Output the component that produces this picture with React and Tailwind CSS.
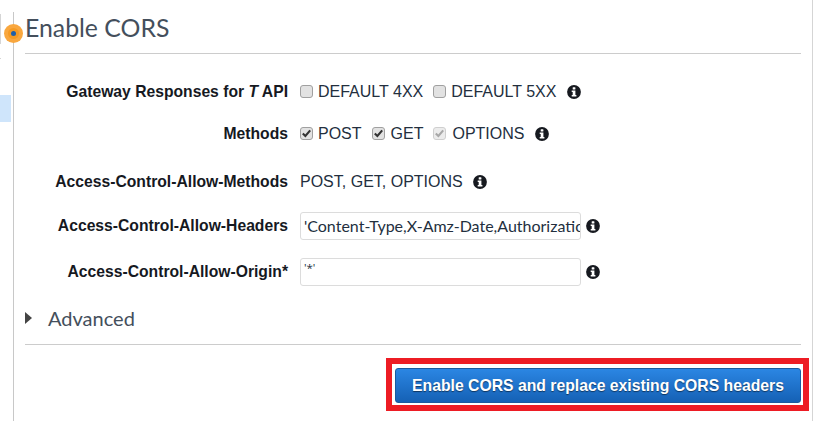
import React from "react";

function Info() {
  return (
    <svg width="14" height="14" viewBox="0 0 14 14" className="shrink-0 block">
      <circle cx="7" cy="7" r="6.9" fill="#16191f" />
      <rect x="5.7" y="2.2" width="2.7" height="2.4" rx="0.5" fill="#fff" />
      <path d="M4.7 5.5h3.7v4.4h1v1.6H4.7V9.9h1V7.1h-1z" fill="#fff" />
    </svg>
  );
}

function Check({ checked, disabled, label, className = "", gap = "ml-[5px]" }) {
  return (
    <span className={`inline-flex items-center ${className}`}>
      <span
        className={`-mt-[2px] w-[13px] h-[13px] rounded-[3px] border flex items-center justify-center ${
          disabled ? "border-[#cfcfcf] bg-[#ececec]" : "border-[#a0a0a0] bg-[#e2e2e2]"
        }`}
      >
        {checked && (
          <svg width="9" height="9" viewBox="0 0 9 9">
            <path
              d="M0.8 4.4 3.4 7 8.2 1.4"
              fill="none"
              stroke={disabled ? "#a8a8a8" : "#333"}
              strokeWidth="2.1"
            />
          </svg>
        )}
      </span>
      <span className={gap}>{label}</span>
    </span>
  );
}

function Row({ label, className = "", children }) {
  return (
    <div className={`flex items-center ${className}`}>
      <div className="w-[263px] text-right font-bold text-[#16191f] text-[15.7px] whitespace-nowrap">{label}</div>
      <div className="ml-[12px] flex items-center text-[16px] text-[#232f3e] whitespace-nowrap">{children}</div>
    </div>
  );
}

function TextBox({ value, small }) {
  return (
    <div
      className={`w-[281px] h-[28px] border border-[#dcdcdc] rounded-[3px] bg-white pl-[3px] overflow-hidden whitespace-nowrap text-[#232f3e] ${
        small ? "text-[11.5px] leading-[18px]" : "text-[16px] leading-[26px]"
      }`}
      style={{ fontFamily: small ? '"Open Sans", sans-serif' : "Lato, sans-serif" }}
    >
      {value}
    </div>
  );
}

export default function App() {
  return (
    <div
      className="relative w-[813px] h-[421px] overflow-hidden bg-white flex"
      style={{ fontFamily: '"Liberation Sans", Arial, sans-serif' }}
    >
      <aside className="w-[14px] shrink-0 mt-[12px] border-r border-[#c8c8c8] h-[409px] flex flex-col">
        <div className="w-px h-[30px] mt-[2px] bg-[#d5d5d5]" />
        <div className="w-[1px] h-px mt-[14px] bg-[#d5d5d5]" />
        <div className="w-[11px] h-[27px] mt-[36px] bg-[#cfe5fb]" />
      </aside>
      <div className="absolute left-[4px] top-[24px] w-[19px] h-[19px] rounded-full bg-[#f9a73e] flex items-center justify-center">
        <div className="w-[11px] h-[11px] rounded-full bg-[#f59a23] flex items-center justify-center">
          <div className="w-[5px] h-[5px] rounded-full bg-[#1f5fa8]" />
        </div>
      </div>

      <main className="flex-1 ml-[11px] mr-[12px] flex flex-col">
        <h1
          className="pt-[12px] text-[24.8px] leading-[32px] text-[#444f5c] border-b border-[#cccccc] box-content -mb-px"
          style={{ fontFamily: "Lato, sans-serif", height: "41px" }}
        >
          Enable CORS
        </h1>

        <Row label={<span>Gateway Responses for <i>T</i> API</span>} className="mt-[29px] h-[20px]">
          <Check label="DEFAULT 4XX" />
          <Check label="DEFAULT 5XX" className="ml-[10px]" />
          <span className="ml-[11px]"><Info /></span>
        </Row>
        <Row label="Methods" className="mt-[22px] h-[20px]">
          <Check checked label="POST" />
          <Check checked label="GET" className="ml-[10px]" gap="ml-[6px]" />
          <Check checked disabled label="OPTIONS" className="ml-[10px]" gap="ml-[6px]" />
          <span className="ml-[11px]"><Info /></span>
        </Row>
        <Row label="Access-Control-Allow-Methods" className="mt-[28px] h-[20px]">
          <span>POST, GET, OPTIONS</span>
          <span className="ml-[10px]"><Info /></span>
        </Row>
        <Row label="Access-Control-Allow-Headers" className="mt-[20px] h-[28px]">
          <TextBox value="'Content-Type,X-Amz-Date,Authorization,X-Api-Key" />
          <span className="ml-[5px]"><Info /></span>
        </Row>
        <Row label="Access-Control-Allow-Origin*" className="mt-[18px] h-[28px]">
          <TextBox value="'*'" small />
          <span className="ml-[5px]"><Info /></span>
        </Row>

        <div className="mt-[20px] h-[24px] flex items-center text-[20px] text-[#444f5c]" style={{ fontFamily: "Lato, sans-serif" }}>
          <svg width="7" height="12" viewBox="0 0 7 12"><path d="M0 0l7 6-7 6z" fill="#444" /></svg>
          <span className="ml-[16px]">Advanced</span>
        </div>

        <div className="mt-[14px] border-t border-[#cccccc]" />

        <div className="mt-[13px] flex justify-end">
          <div className="-mr-[8px] w-[423px] h-[53px] border-[6px] border-[#ed1c24] pl-[3px] pt-[4px]">
            <button className="block w-[406px] h-[35px] rounded-[3px] border border-[#1a5a9e] bg-gradient-to-b from-[#2b86e3] to-[#1561b5] text-white font-bold text-[15.75px] whitespace-nowrap [text-shadow:0_1px_1px_rgba(0,0,0,0.5)]">
              Enable CORS and replace existing CORS headers
            </button>
          </div>
        </div>
      </main>
      <div className="w-px h-full bg-[#d5d5d5] absolute right-0 top-0" />
    </div>
  );
}
